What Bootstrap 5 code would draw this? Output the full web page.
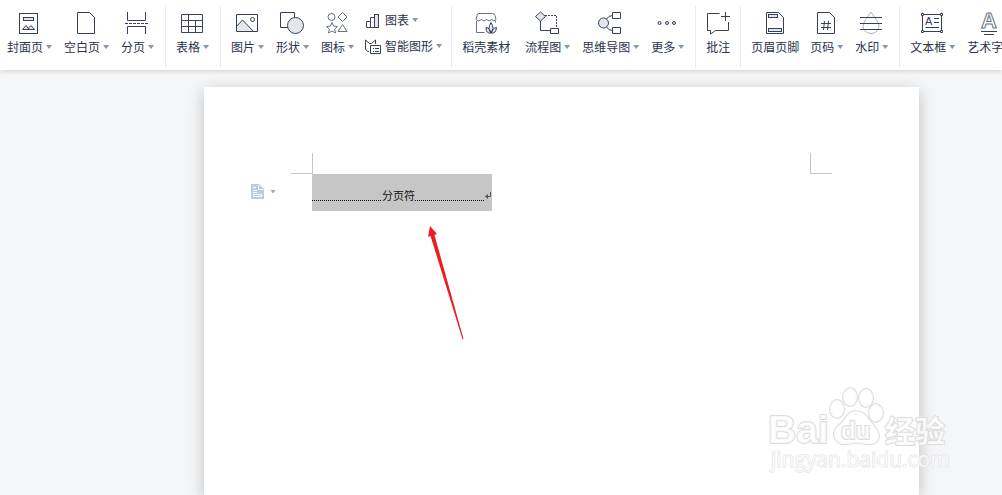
<!DOCTYPE html>
<html lang="zh-CN">
<head>
<meta charset="utf-8">
<meta name="viewport" content="width=device-width, initial-scale=1">
<title>文档编辑</title>
<link href="https://cdn.jsdelivr.net/npm/bootstrap@5.3.0/dist/css/bootstrap.min.css" rel="stylesheet">
<style>
  body { font-family: "Liberation Sans", "Noto Sans CJK SC", sans-serif; background: #f5f6f8; color: #2b344b; }
  .ribbon { height: 70px; padding-left: 1px; box-shadow: 0 1px 5px rgba(0,0,0,.16); z-index: 2; }
  .tool { border: 0; background: none; color: inherit; padding: 11px 6px 0; font-size: 12px; line-height: 18px; white-space: nowrap; }
  .tool-plain { padding-right: 5px; }
  .tool svg, .mini svg, .wm svg, .arrow svg { display: block; }
  .tool > svg { margin: 0 auto 4px; }
  .tool:hover, .mini:hover { background: #eef1f6; }
  .arr::after { content: ""; width: 6px; height: 4px; margin: 0 0 2px 3px; background: #8d93a8; clip-path: polygon(0 0, 100% 0, 50% 100%); }
  .rule { width: 1px; height: 62px; margin: 6px 4px 0 5px; background: #ececef; }
  .mini-group { padding: 12px 4px 0 5px; gap: 8px; }
  .mini { border: 0; background: none; color: inherit; padding: 0; height: 18px; font-size: 12px; line-height: 18px; white-space: nowrap; }
  .mini svg { margin-right: 4px; }
  .ic { fill: none; stroke: #36405a; stroke-width: 1; }
  .ic-soft { stroke: #697086; }
  .ic .tint { fill: #e4e6ec; }
  .desk { padding: 17px 83px 0 204px; }
  .sheet { min-height: calc(100vh - 87px); padding: 66px 87px 0; box-shadow: 0 4px 16px rgba(0,0,0,.22); }
  .crop { width: 22px; height: 21px; border: 0 solid #c6c6c6; border-bottom-width: 1px; }
  .crop-l { border-right-width: 1px; }
  .crop-r { border-left-width: 1px; }
  .gutter { width: 21px; }
  .paste { border: 0; background: none; padding: 0; margin: 10px 0 0 -40px; width: 61px; height: 15px; }
  .paste::after { content: ""; width: 6px; height: 4px; margin-left: 6px; background: #a9a9a9; clip-path: polygon(0 0, 100% 0, 50% 100%); }
  .picked { width: 180px; height: 37px; background: #c6c6c6; color: #111; font-size: 11px; line-height: 16px; padding: 14px 0 0; }
  .dots { height: 1px; margin-top: 12px; background: repeating-linear-gradient(90deg, #111 0 1px, transparent 1px 2px); }
  .arrow { left: 425px; top: 224px; pointer-events: none; z-index: 3; }
  .wm { right: 46px; bottom: 14px; pointer-events: none; z-index: 3; }
  .wm svg { fill: #fff; fill-opacity: .8; stroke: #dcdcdc; stroke-width: 2; paint-order: stroke; stroke-linejoin: round; }
</style>
<script src="https://cdn.jsdelivr.net/npm/bootstrap@5.3.0/dist/js/bootstrap.bundle.min.js"></script>
</head>
<body class="overflow-hidden position-relative vh-100">

<header class="ribbon bg-white d-flex align-items-start position-relative">
  <button class="tool" type="button">
    <svg class="ic" width="25" height="24"><rect x="2.5" y="2.5" width="18" height="20"/><rect class="tint" x="6.5" y="6.5" width="10" height="3"/><path class="tint" d="M5.5 18.5L9 14.500l3 4zM12.500 18.500l-1-1.500 2.500-2.500 3.500 4z"/></svg>
    <span class="d-flex align-items-center arr">封面页</span>
  </button>
  <button class="tool" type="button">
    <svg class="ic" width="25" height="24"><path d="M3.500 1.500h12l5 5v16h-17zM15.500 1.500l5 5"/></svg>
    <span class="d-flex align-items-center arr">空白页</span>
  </button>
  <button class="tool" type="button">
    <svg class="ic" width="25" height="24"><path d="M2.500 1v8.500h18V1M2.500 23v-7.500h18V23"/><path d="M0 12.500h23" stroke-dasharray="3 1"/></svg>
    <span class="d-flex align-items-center arr">分页</span>
  </button>
  <div class="rule flex-shrink-0"></div>
  <button class="tool" type="button">
    <svg class="ic" width="25" height="24"><path d="M1.500 3.500h21v18h-21zM1.500 9.500h21M1.500 15.500h21M8.500 3.500v18M15.500 9.500v12"/></svg>
    <span class="d-flex align-items-center arr">表格</span>
  </button>
  <div class="rule flex-shrink-0"></div>
  <button class="tool" type="button">
    <svg class="ic" width="25" height="24"><path class="tint" stroke="none" d="M2 15L8 8.500 19 20.500H2z"/><path d="M1.500 3.500h21v17h-21zM1.500 15.500l6-6.500 11 11.500"/><circle cx="17.500" cy="8.500" r="2"/></svg>
    <span class="d-flex align-items-center arr">图片</span>
  </button>
  <button class="tool" type="button">
    <svg class="ic" width="25" height="24"><path d="M.5 1.500h14v15H.5z"/><circle class="tint" cx="15.500" cy="14.500" r="8"/></svg>
    <span class="d-flex align-items-center arr">形状</span>
  </button>
  <button class="tool" type="button">
    <svg class="ic ic-soft" width="25" height="24"><circle cx="6.500" cy="6" r="3.500"/><path d="M17.500 1.500L22 6l-4.500 4.500L13 6zM17.500 13.500l4.500 7h-9zM7 11.500l1.600 3.600 3.900.4-2.900 2.600.9 3.900L7 20l-3.500 2 .9-3.900-2.900-2.600 3.900-.4z"/></svg>
    <span class="d-flex align-items-center arr">图标</span>
  </button>
  <div class="mini-group d-flex flex-column align-items-start flex-shrink-0">
    <button class="mini d-flex align-items-center arr" type="button">
      <svg class="ic" width="16" height="16"><path d="M1.500 8.500h4v6h-4zM5.500 4.500h4v10h-4z"/><rect class="tint" x="9.500" y="1.500" width="4" height="13"/></svg>图表
    </button>
    <button class="mini d-flex align-items-center arr" type="button">
      <svg class="ic" width="16" height="16"><path d="M4 12.500H2.500L.5 10V1l4 3.500h2L10.500 1v4M5.500 6.500h10v8h-10zM8 9.500h1M10 9.500h4M8 12.500h1M10 12.500h4"/></svg>智能图形
    </button>
  </div>
  <div class="rule flex-shrink-0"></div>
  <button class="tool tool-plain me-1" type="button">
    <svg class="ic ic-soft" width="24" height="24"><path d="M2.500 10v11.500h8M21.500 9.500v2M5 2.500h13.500q2 0 2.500 2l1 4q-2 3-4.500 0-2.500 3-5 0-2.500 3-5 0-3 3-5.500 0l1-4q.5-2 2-2z"/><path stroke="#36405a" class="tint" d="M17 22q-4-4 0-10.500 4 6 0 10.500zM17 22q-5 1-5-5.500 4 .5 5 5.500zM17 22q5 1 5.500-5.500-4 .5-5.500 5.500z"/></svg>
    <span class="d-block">稻壳素材</span>
  </button>
  <button class="tool" type="button">
    <svg class="ic" width="25" height="24"><path class="tint" d="M5.500 1l5 4.500-5 4.500-5-4.500z"/><path d="M5.500 10v9.500h10M15.500 17.500h8v5h-8z"/><path d="M10 4.500h11.500V17" stroke-dasharray="2 1"/></svg>
    <span class="d-flex align-items-center arr">流程图</span>
  </button>
  <button class="tool" type="button">
    <svg class="ic" width="25" height="24"><path d="M8.500 8q2-3.500 6-3.500M8.500 16q2 3.500 6 3.500M14.500 1.500h8v6h-8zM14.500 16.500h8v6h-8z"/><circle class="tint" cx="5.500" cy="12" r="5"/></svg>
    <span class="d-flex align-items-center arr">思维导图</span>
  </button>
  <button class="tool" type="button">
    <svg class="ic" width="25" height="24"><circle class="tint" cx="4.500" cy="12" r="1.500"/><circle class="tint" cx="12" cy="12" r="1.500"/><circle class="tint" cx="19" cy="12" r="1.500"/></svg>
    <span class="d-flex align-items-center arr">更多</span>
  </button>
  <div class="rule flex-shrink-0"></div>
  <button class="tool tool-plain" type="button">
    <svg class="ic" width="24" height="24"><path d="M13.500 2.500h-12v17h3v3.500l5-3.500h13V11M19.500 1v9M15 5.500h9"/></svg>
    <span class="d-block">批注</span>
  </button>
  <div class="rule flex-shrink-0"></div>
  <button class="tool tool-plain" type="button">
    <svg class="ic" width="24" height="24"><path d="M3.500 1.500h12l5 5v16h-17zM15.500 1.500l5 5"/><rect class="tint" x="5.500" y="3.500" width="9" height="3"/><rect class="tint" x="5.500" y="17.500" width="13" height="3"/></svg>
    <span class="d-block">页眉页脚</span>
  </button>
  <button class="tool" type="button">
    <svg class="ic" width="25" height="24"><path d="M3.500 1.500h12l5 5v16h-17zM15.500 1.500l5 5M10.500 10l-1 9M14.500 10l-1 9M7 12.500h10M7 16.500h10"/></svg>
    <span class="d-flex align-items-center arr">页码</span>
  </button>
  <button class="tool" type="button">
    <svg class="ic" width="25" height="24"><path stroke="#b0b4c0" d="M12 1l5.500 8q2.500 4 2.500 6a8 7.500 0 0 1-16 0q0-2 2.500-6z"/><path d="M1 6.500h22M1 12.500h22M1 18.500h22"/></svg>
    <span class="d-flex align-items-center arr">水印</span>
  </button>
  <div class="rule flex-shrink-0"></div>
  <button class="tool" type="button">
    <svg class="ic" width="25" height="24"><path d="M2.500 3.500h19v17h-19zM14 7.500h5M14 11.500h5M5.500 16.500H19"/><path fill="#fff" d="M1.500 2.500h2v2h-2zM20.500 2.500h2v2h-2zM1.500 19.500h2v2h-2zM20.500 19.500h2v2h-2z"/><text x="5" y="14" font-size="11" fill="#36405a" stroke="none">A</text></svg>
    <span class="d-flex align-items-center arr">文本框</span>
  </button>
  <button class="tool" type="button">
    <svg class="ic ic-soft" width="25" height="24"><text x="4" y="17" font-size="22" font-weight="700">A</text><path stroke="#36405a" d="M4 20.500h16M7 23.500h10"/></svg>
    <span class="d-flex align-items-center arr">艺术字</span>
  </button>
</header>

<main class="desk">
  <article class="sheet bg-white">
    <div class="d-flex justify-content-between">
      <span class="crop crop-l"></span><span class="crop crop-r"></span>
    </div>
    <div class="d-flex align-items-start">
      <div class="gutter flex-shrink-0">
        <button class="paste d-flex align-items-center" type="button" aria-label="页面选项">
          <svg width="13" height="15"><path fill="#b7cbea" d="M0 0h8l5 5v10H0z"/><path fill="none" stroke="#fff" d="M7.500 1v4.500H12M2 3.500h3M2 6.500h4M2 8.500h4M2.500 10.500h8v2h-8z"/></svg>
        </button>
      </div>
      <div class="picked d-flex align-items-start">
        <span class="dots flex-fill"></span><span>分页符</span><span class="dots flex-fill"></span>
        <svg class="mt-1" width="7" height="8"><path fill="none" stroke="#555" d="M5.500 0v4.500H2"/><path fill="#555" d="M0 4.500L3 2v5z"/></svg>
      </div>
    </div>
  </article>
</main>

<div class="arrow position-absolute">
  <svg width="42" height="118"><path fill="#ec1c24" d="M5 2l7 8-2.500 1L38.500 115l-1 .3L5.500 12l-2.500.8z"/></svg>
</div>

<div class="wm position-absolute">
  <svg width="188" height="98" viewBox="768 383 188 98">
    <g font-family="Liberation Sans" font-weight="700">
      <text x="768" y="443" font-size="39">Bai</text>
      <ellipse cx="837" cy="409" rx="7" ry="9"/><ellipse cx="850" cy="397" rx="7" ry="9"/><ellipse cx="866" cy="398" rx="7" ry="9"/><ellipse cx="876" cy="413" rx="7" ry="9"/>
      <path d="M856 411c8 0 11 6 15 11s8 8 8 14-5 9-11 8-16-1-22 0-12-3-12-10 5-8 9-13 6-10 13-10z"/>
      <text x="841" y="439" font-size="24">du</text>
    </g>
    <text x="885" y="442" font-family="Noto Sans CJK SC" font-size="30" font-weight="700">经验</text>
    <text x="771" y="467" font-family="Open Sans" font-size="21" stroke-width="1">jingyan.baidu.com</text>
  </svg>
</div>
</body>
</html>
